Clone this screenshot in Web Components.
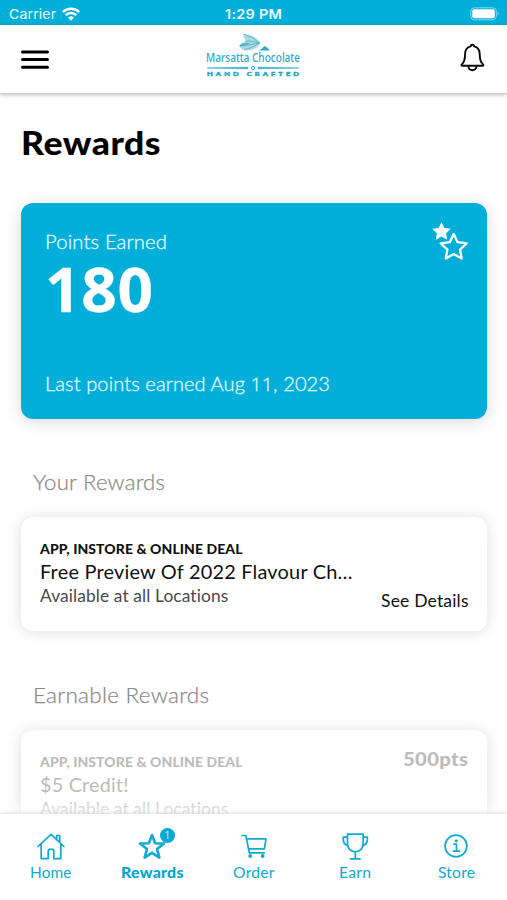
<!DOCTYPE html>
<html lang="en">
<head>
<meta charset="utf-8">
<title>Rewards</title>
<style>
html,body{margin:0;height:100%;background:#fff}
body{font-family:Lato,"Open Sans",sans-serif;overflow:hidden}
</style>
</head>
<body>
<rewards-app></rewards-app>
<script>
const define = (name, html, after) => customElements.define(name, class extends HTMLElement {
  connectedCallback() {
    if (this.shadowRoot) return;
    const root = this.attachShadow({mode: 'open'});
    const t = document.createElement('template');
    t.innerHTML = html;
    root.append(t.content.cloneNode(true));
    if (after) after(this, root);
  }
});

// A single line of type that fills the width given in "w": the share in
// "stretch" by widening the glyphs, and the rest by tracking.
define('type-line', `<style>
  :host{display:block;white-space:nowrap;flex:none}
  span{display:inline-block;vertical-align:top;transform-origin:0 50%}
</style><span><slot></slot></span>`, (el, root) => {
  const w = parseFloat(el.getAttribute('w'));
  const share = parseFloat(el.getAttribute('stretch') || .75);
  const s = root.querySelector('span');
  const n = el.textContent.length;
  const natural = s.getBoundingClientRect().width;
  const k = 1 + (w / natural - 1) * share;
  el.style.width = w + 'px';
  s.style.letterSpacing = (w / k - natural) / (n - 1) + 'px';
  s.style.transform = `scaleX(${k})`;
});

define('status-bar', `<style>
  :host{display:grid;grid-template-columns:1fr auto 1fr;align-items:center;height:25px;background:#00afd9;color:#e9fbff;
    font:400 13.3px/16px Inter,sans-serif;padding:2px 7px 0 9px;box-sizing:border-box;flex:none}
  .l{display:flex;gap:5.500px;align-items:center}
  .t{font-weight:600;margin-right:2px}
  .b{justify-self:end}
  svg{display:block}
</style>
<div class="l"><type-line w="47">Carrier</type-line>
<svg width="18" height="14" viewBox="0 0 18 14" fill="none" stroke="#fff" stroke-width="2.500"><path d="M.8 5.100a11.600 11.600 0 0 1 16.400 0M3.700 8.200a7.500 7.500 0 0 1 10.600 0"/><path d="M9 13.800L6.100 10.800a4.100 4.100 0 0 1 5.800 0z" fill="#fff" stroke="none"/></svg></div>
<type-line class="t" w="57">1:29 PM</type-line>
<svg class="b" width="30" height="14" viewBox="0 0 30 14"><rect x=".8" y=".8" width="25.500" height="12" rx="3.500" fill="none" stroke="#7fd9ef"/><rect x="2.300" y="2.300" width="22.500" height="9" rx="2" fill="#fff"/><path d="M27.600 4.600q2 2.200 0 4.400z" fill="#7fd9ef"/></svg>`);

define('brand-logo', `<style>
  :host{display:flex;flex-direction:column;align-items:center;color:#2ba9c9;width:96px}
  svg{display:block}
  .n{font:500 12.300px/14px "Noto Sans",sans-serif;margin-top:-1px}
  .h{font:900 5.700px/7px Lato,sans-serif;-webkit-text-stroke:.5px #2ba9c9;margin-top:-1px}
</style>
<svg width="36" height="19" viewBox="0 0 36 19"><path d="M8.500 1Q20 1.500 25.500 10Q22 17 12 17.500Q7 17.500 4 13Q6 9 12 8Q8 5 8.500 1z" fill="#a9d9e2"/><path d="M8.500 1Q18 4 25 10M5 13Q15 12 25 10M10 8Q18 8 25 10M9 17Q17 15 25 10" fill="none" stroke="#5cb7c9" stroke-width=".9"/><path d="M4 13Q8 9.500 15 10Q12 12.500 4 13z" fill="#46b0c8"/><path d="M24 17.500l3-2 2.500-2.500 2.500 1.500 3 3z" fill="#2ba9c9"/></svg>
<type-line class="n" w="94" stretch="1">Marsatta Chocolate</type-line>
<svg width="94" height="6" viewBox="0 0 94 6"><path d="M1 3L42 2.200V3.800zM93 3L52 2.200V3.800z" fill="#2ba9c9" stroke="#2ba9c9" stroke-width=".6"/><circle cx="47" cy="3" r="1.600" fill="none" stroke="#2ba9c9"/></svg>
<type-line class="h" w="92" stretch=".28">HAND CRAFTED</type-line>`);

define('app-header', `<style>
  :host{display:grid;grid-template-columns:1fr auto 1fr;height:69px;padding:0 21.500px 0 20px;box-sizing:border-box;flex:none;
    border-bottom:1px solid #cfcfcf;box-shadow:0 1px 4px rgba(0,0,0,.25);position:relative;background:#fff}
  svg{display:block}
  .m{margin-top:24px}
  .b{justify-self:end;margin-top:18px}
  brand-logo{margin:8px 0 0 1px}
</style>
<svg class="m" width="29" height="21" viewBox="0 0 29 21" stroke="#000" stroke-width="3" stroke-linecap="round"><path d="M2.500 2.900H27.500M2.500 10.600H27.500M2.500 18.300H27.500"/></svg>
<brand-logo></brand-logo>
<svg class="b" width="26" height="30" viewBox="0 0 26 30" fill="none" stroke="#080808" stroke-width="1.900" stroke-linejoin="round"><path d="M10.700 3.400a1.700 1.700 0 0 1 3.400 0C17.700 4.300 19.700 7 19.700 11c0 5.600.7 8.100 3.200 10.300.9.900.6 1.500-.6 1.500H2.500c-1.200 0-1.500-.6-.6-1.500C4.400 19.100 5.100 16.600 5.100 11c0-4 2-6.700 5.600-7.600z"/><path d="M8.400 23.200a4 4 0 0 0 8 0"/></svg>`);

define('points-card', `<style>
  :host{display:flex;justify-content:space-between;height:215.500px;border-radius:12px;background:#00afd9;color:#e2f9ff;box-sizing:border-box;
    padding:26.500px 18.500px 23px 24px;box-shadow:0 3px 16px rgba(0,0,0,.15);font:300 19.500px/24px Lato,sans-serif;-webkit-text-stroke:.3px #e2f9ff}
  .c{display:flex;flex-direction:column}
  .n{font:700 60px/60px "Open Sans",sans-serif;color:#fff;margin:5px 0 0 .5px}
  .d{margin-top:auto}
  i{font:300 19px/20px "Open Sans",sans-serif}
  svg{display:block;margin-top:-9.500px}
</style>
<div class="c"><type-line w="122">Points Earned</type-line><type-line class="n" w="108">180</type-line>
<type-line class="d" w="285">Last points earned Aug <i>11</i>, 2023</type-line></div>
<svg width="38" height="42" viewBox="0 0 38 42"><path d="M10.500 2l2.800 5.900 6.500.9-4.700 4.500 1.100 6.400-5.700-3.100-5.700 3.100 1.100-6.400L1.200 8.800l6.500-.9z" fill="#fff"/><path d="M22.700 14l3.900 8.200 9 1.200-6.600 6.200 1.700 8.900-8-4.400-8 4.400 1.700-8.900-6.600-6.200 9-1.200z" fill="#00afd9" stroke="#fff" stroke-width="2.300" stroke-linejoin="round"/></svg>`);

define('reward-card', `<style>
  :host{display:flex;justify-content:space-between;height:114.500px;border-radius:12px;background:#fff;box-sizing:border-box;
    padding:23.500px 19px 20.500px 19.200px;box-shadow:0 1px 14px rgba(0,0,0,.14);color:#111}
  :host([locked]){color:#bcbcbc}
  ::slotted([slot=kind]){font:900 13.500px/18px Lato,sans-serif}
  ::slotted([slot=name]){font:400 18.700px/24px Lato,sans-serif;margin-top:1.300px}
  ::slotted([slot=place]){font:400 16.500px/20px Lato,sans-serif;margin-top:2.600px;color:#4a4a4a}
  :host([locked]) ::slotted([slot=place]){color:#c4c4c4}
  .r{display:flex;flex-direction:column}
  ::slotted([slot=points]){font:900 19px/24px Lato,sans-serif;margin-top:-6.200px}
  ::slotted([slot=action]){font:400 16.500px/20px Lato,sans-serif;margin-top:auto}
</style>
<div><slot name="kind"></slot><slot name="name"></slot><slot name="place"></slot></div>
<div class="r"><slot name="points"></slot><slot name="action"></slot></div>`);

define('nav-item', `<style>
  :host{display:flex;flex-direction:column;align-items:center;flex:1;color:#12a9ce;font:400 14.800px/18px Lato,sans-serif}
  :host([active]){font-weight:900;color:#00a5cf}
  .i{position:relative;width:30px;height:30px;margin:17px 0 2px}
  ::slotted(svg){display:block;width:30px;height:30px;fill:none;stroke:#12a9ce;stroke-width:1.700;stroke-linejoin:round;stroke-linecap:round}
  ::slotted(b){position:absolute;left:22.500px;top:-3.500px;width:15.500px;height:15.500px;border-radius:50%;background:#08a9d2;color:#d8f5fc;font:400 10px/15px "Open Sans",sans-serif;text-align:center}
</style>
<div class="i"><slot name="icon"></slot><slot name="badge"></slot></div><slot></slot>`);

define('tab-bar', `<style>
  :host{display:flex;height:86px;background:#fff;flex:none;position:relative;box-shadow:0 -2px 3px rgba(0,0,0,.09),0 -5px 16px rgba(255,255,255,.9)}
</style>
<nav-item><svg slot="icon" viewBox="0 0 30 30"><path d="M2 15.500L15 3.300l13 12.200M5.200 13v14.700h7v-8q0-1.300 1.300-1.300h3q1.300 0 1.300 1.300v8h7V13M20.700 8.200V4.500h3v7"/></svg><type-line w="41.500">Home</type-line></nav-item>
<nav-item active><svg slot="icon" viewBox="0 0 30 30" style="stroke-width:2.600;stroke-linejoin:round"><path d="M15 4l3.100 8.200 8.900.4-7 5.500 2.400 8.500-7.400-4.800-7.400 4.800L10 18.100l-7-5.500 8.900-.4z"/></svg><b slot="badge">1</b><type-line w="62.500">Rewards</type-line></nav-item>
<nav-item><svg slot="icon" viewBox="0 0 30 30"><path d="M3.200 4.500h3.600l3.500 17.300H25.300M7.600 7.800H27l-1.600 10.100H9.600"/><g fill="#12a9ce" stroke="none"><circle cx="11.200" cy="25" r="1.900"/><circle cx="23.700" cy="25" r="1.900"/></g></svg><type-line w="41.500">Order</type-line></nav-item>
<nav-item><svg slot="icon" viewBox="0 0 30 30"><path d="M7.500 3.200h15.600v9q0 7.800-7.800 8.600-7.800-.8-7.800-8.600zM7.500 6.200H3.200q-.6 7.400 5 8.400M23.100 6.200h4.300q.6 7.400-5 8.400M15.300 21v6.500M10.500 27.800h9.600"/></svg><type-line w="32">Earn</type-line></nav-item>
<nav-item><svg slot="icon" viewBox="0 0 30 30"><circle cx="15" cy="15" r="10.900"/><path d="M13 13.200h2.500v6.600M12.400 20.200h6"/><circle cx="15.100" cy="9.900" r="1.100" fill="#12a9ce" stroke-width="1"/></svg><type-line w="37">Store</type-line></nav-item>`);

define('rewards-app', `<style>
  :host{display:flex;flex-direction:column;height:900px;width:507px;overflow:hidden}
  main{flex:1;min-height:0;overflow:hidden;padding:28px 19.700px 0 20.600px}
  .t{font:900 33px/40px Lato,sans-serif;color:#000}
  points-card{margin-top:41px}
  .s{font:300 21px/28px Lato,sans-serif;color:#8b8b8b;-webkit-text-stroke:.25px #8b8b8b;margin:49.100px 0 21.400px 12.300px}
</style>
<status-bar></status-bar>
<app-header></app-header>
<main>
  <type-line class="t" w="139.500">Rewards</type-line>
  <points-card></points-card>
  <type-line class="s" w="132">Your Rewards</type-line>
  <reward-card>
    <type-line slot="kind" w="202.500">APP, INSTORE &amp; ONLINE DEAL</type-line>
    <type-line slot="name" w="312.500">Free Preview Of 2022 Flavour Ch…</type-line>
    <type-line slot="place" w="188.500">Available at all Locations</type-line>
    <type-line slot="action" w="87.500">See Details</type-line>
  </reward-card>
  <type-line class="s" w="176">Earnable Rewards</type-line>
  <reward-card locked>
    <type-line slot="kind" w="202.500">APP, INSTORE &amp; ONLINE DEAL</type-line>
    <type-line slot="name" w="88.500">$5 Credit!</type-line>
    <type-line slot="place" w="188.500">Available at all Locations</type-line>
    <type-line slot="points" w="65">500pts</type-line>
  </reward-card>
</main>
<tab-bar></tab-bar>`);
</script>
</body>
</html>
